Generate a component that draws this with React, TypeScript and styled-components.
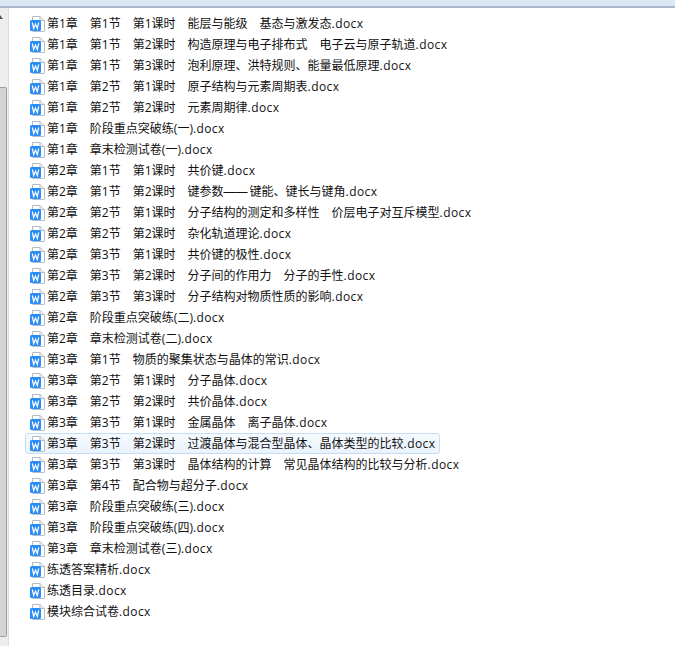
import React from 'react'
import styled, { createGlobalStyle } from 'styled-components'

const GlobalStyle = createGlobalStyle`
  html, body {
    margin: 0;
    padding: 0;
    background: #fff;
  }
`
const Window = styled.div`
  width: 675px;
  height: 646px;
  overflow: hidden;
  display: flex;
  flex-direction: column;
  font-family: "Open Sans", "Noto Sans CJK SC", sans-serif;
`
const TopBar = styled.div`
  height: 6px;
  flex: none;
  background: #dce7f5;
  border-bottom: 2px solid #a9b8cc;
`
const Body = styled.div`
  flex: 1;
  display: flex;
  min-height: 0;
`
const Scrollbar = styled.div`
  width: 8px;
  flex: none;
  background: #eeeeee;
  display: flex;
  flex-direction: column;
  padding: 7px 1px 9px 0;
  box-sizing: border-box;
`
const ArrowUp = styled.div`
  flex: none;
  width: 0;
  height: 0;
  margin-bottom: 68px;
  border-right: 3px solid transparent;
  border-bottom: 4px solid #555;
`
const Thumb = styled.div`
  flex: 1;
  background: #d4d4d4;
  border: 1px solid #a0a0a0;
  border-left: none;
  border-radius: 0 2px 2px 0;
`
const Pane = styled.div`
  flex: 1;
  border-left: 1px solid #d5e0ee;
  padding: 5px 0 0 16px;
  background: #fff;
`
const List = styled.ul`
  list-style: none;
  margin: 0;
  padding: 0;
`
const Row = styled.li<{ $selected?: boolean }>`
  height: 21px;
  width: fit-content;
  display: flex;
  align-items: center;
  gap: 2px;
  box-sizing: border-box;
  padding: 0 4px;
  border: 1px solid ${p => (p.$selected ? '#c6dcf5' : 'transparent')};
  border-radius: 3px;
  background: ${p => (p.$selected ? 'linear-gradient(#f6fafe, #eaf3fd)' : 'transparent')};
  font-size: 12px;
  color: #111;
  white-space: pre;
`
const FileName = styled.span`
  line-height: 19px;
`
const Dash = styled.span`
  font-family: "Liberation Sans", sans-serif;
  padding-right: 2px;
`
const Ext = styled.span`
  letter-spacing: .4px;
`

const WordIcon = () => (
  <svg width="15" height="16" viewBox="0 0 15 16" style={{ flex: 'none' }}>
    <path d="M2.5 .5H10L14.5 4.5V15a.5 .5 0 0 1-.5 .5H3a.5 .5 0 0 1-.5-.5Z" fill="#fff" stroke="#b4bcc8" />
    <path d="M10 .5V4.5h4.5" fill="#eef1f5" stroke="#b4bcc8" />
    <rect x="0" y="4" width="11" height="11" rx="1.5" fill="#2a8cf6" />
    <path d="M2.3 6.5l1.4 6 1.8-4.5 1.8 4.5 1.4-6" fill="none" stroke="#fff" strokeWidth="1.2" />
  </svg>
)

const files = [
  '第1章　第1节　第1课时　能层与能级　基态与激发态',
  '第1章　第1节　第2课时　构造原理与电子排布式　电子云与原子轨道',
  '第1章　第1节　第3课时　泡利原理、洪特规则、能量最低原理',
  '第1章　第2节　第1课时　原子结构与元素周期表',
  '第1章　第2节　第2课时　元素周期律',
  '第1章　阶段重点突破练(一)',
  '第1章　章末检测试卷(一)',
  '第2章　第1节　第1课时　共价键',
  '第2章　第1节　第2课时　键参数——键能、键长与键角',
  '第2章　第2节　第1课时　分子结构的测定和多样性　价层电子对互斥模型',
  '第2章　第2节　第2课时　杂化轨道理论',
  '第2章　第3节　第1课时　共价键的极性',
  '第2章　第3节　第2课时　分子间的作用力　分子的手性',
  '第2章　第3节　第3课时　分子结构对物质性质的影响',
  '第2章　阶段重点突破练(二)',
  '第2章　章末检测试卷(二)',
  '第3章　第1节　物质的聚集状态与晶体的常识',
  '第3章　第2节　第1课时　分子晶体',
  '第3章　第2节　第2课时　共价晶体',
  '第3章　第3节　第1课时　金属晶体　离子晶体',
  '第3章　第3节　第2课时　过渡晶体与混合型晶体、晶体类型的比较',
  '第3章　第3节　第3课时　晶体结构的计算　常见晶体结构的比较与分析',
  '第3章　第4节　配合物与超分子',
  '第3章　阶段重点突破练(三)',
  '第3章　阶段重点突破练(四)',
  '第3章　章末检测试卷(三)',
  '练透答案精析',
  '练透目录',
  '模块综合试卷',
]

const SELECTED = 20

const App: React.FC = () => {
  return (
    <Window>
      <GlobalStyle />
      <TopBar />
      <Body>
        <Scrollbar>
          <ArrowUp />
          <Thumb />
        </Scrollbar>
        <Pane>
          <List>
            {files.map((name, i) => {
              const [before, after] = name.split('——')
              return (
                <Row key={name} $selected={i === SELECTED}>
                  <WordIcon />
                  <FileName>
                    {before}
                    {after !== undefined && <Dash>——</Dash>}
                    {after}
                    <Ext>.docx</Ext>
                  </FileName>
                </Row>
              )
            })}
          </List>
        </Pane>
      </Body>
    </Window>
  )
}

export default App
